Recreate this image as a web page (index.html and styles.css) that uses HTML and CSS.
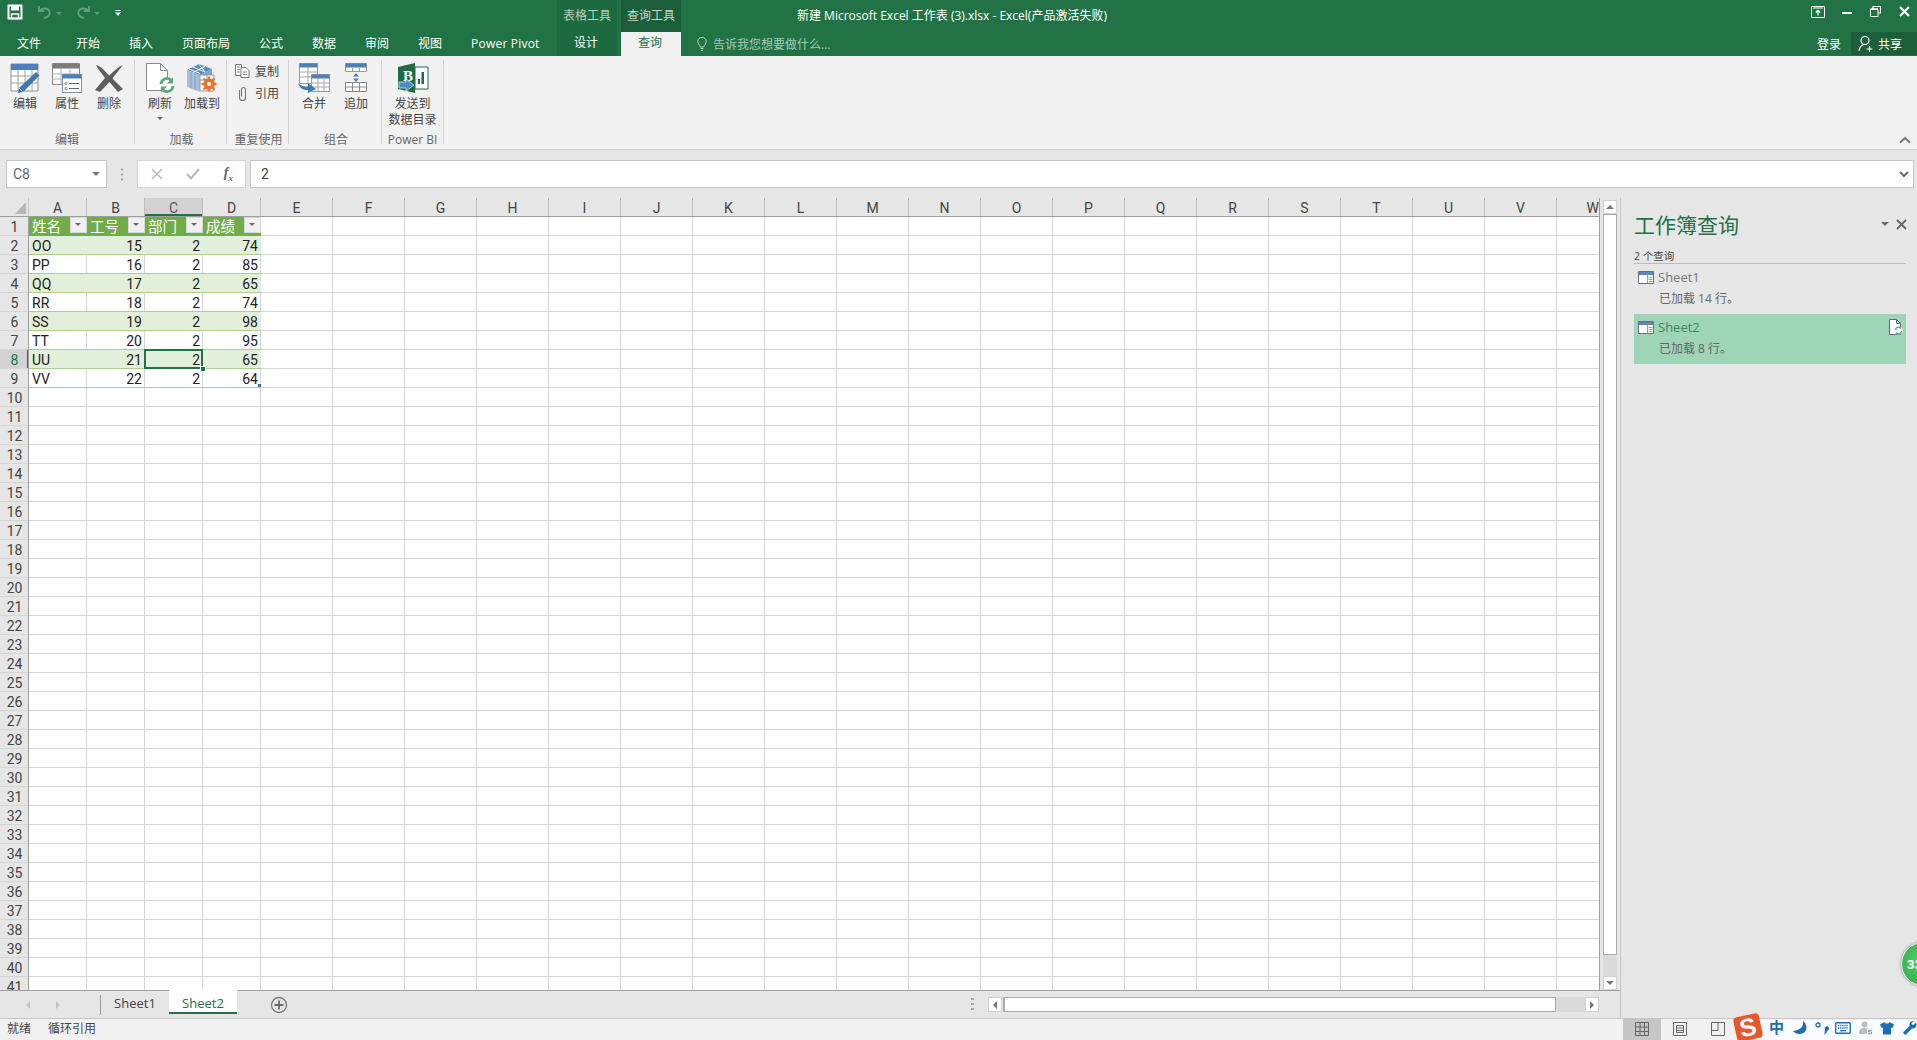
FILE: index.html
```html
<!DOCTYPE html>
<html lang="zh-CN">
<head>
<meta charset="utf-8">
<title>Excel</title>
<link rel="stylesheet" href="styles.css">
</head>
<body>
<div class="app">
  <header class="titlebar">
    <div class="tb-left">
      <div class="qat">
        <svg class="qat-save" width="16" height="16" viewBox="0 0 16 16"><path d="M1.500 1.500h13v13h-13z" fill="none" stroke="#fff" stroke-width="2"/><path d="M4 1.500h8v5H4z" fill="#fff"/><path d="M4.500 10h7v4.500h-7z" fill="none" stroke="#fff" stroke-width="1.600"/></svg>
        <svg class="qat-undo" width="18" height="16" viewBox="0 0 18 16"><path d="M3 2v5h5M3.500 7C6 3.500 12 3.500 13.500 7.500 14.500 10.500 12 13.500 8 14" fill="none" stroke="#5f9c7b" stroke-width="2"/></svg>
        <span class="qat-caret"></span>
        <svg class="qat-redo" width="18" height="16" viewBox="0 0 18 16"><path d="M15 2v5h-5M14.500 7C12 3.500 6 3.500 4.500 7.500 3.500 10.500 6 13.500 10 14" fill="none" stroke="#5f9c7b" stroke-width="2"/></svg>
        <span class="qat-caret"></span>
        <svg class="qat-custom" width="8" height="8" viewBox="0 0 8 8"><path d="M1 1h6v1H1zM1 3.500h6L4 7z" fill="#fff"/></svg>
      </div>
      <nav class="tabs">
        <span class="tab tab-file">文件</span>
        <span class="tab">开始</span>
        <span class="tab">插入</span>
        <span class="tab">页面布局</span>
        <span class="tab">公式</span>
        <span class="tab">数据</span>
        <span class="tab">审阅</span>
        <span class="tab">视图</span>
        <span class="tab tab-latin">Power Pivot</span>
      </nav>
    </div>
    <div class="ctx ctx-table">
      <div class="ctx-label">表格工具</div>
      <div class="ctx-tab">设计</div>
    </div>
    <div class="ctx ctx-query">
      <div class="ctx-label">查询工具</div>
      <div class="ctx-tab ctx-active">查询</div>
    </div>
    <div class="tb-right">
      <div class="title-row">
        <span class="doc-title">新建 Microsoft Excel 工作表 (3).xlsx - Excel(产品激活失败)</span>
        <div class="winctl">
          <svg width="14" height="12" viewBox="0 0 14 12"><path d="M.500.500h13v11H.500z" fill="none" stroke="#fff"/><path d="M2 2h10" stroke="#fff"/><path d="M7 9.500V4.500M4.800 6.500 7 4.300l2.200 2.200" fill="none" stroke="#fff" stroke-width="1.200"/></svg>
          <svg width="10" height="12" viewBox="0 0 10 12"><path d="M0 6h10v2H0z" fill="#fff"/></svg>
          <svg width="11" height="11" viewBox="0 0 11 11"><path d="M.500 3.500h7.500v7H.500z" fill="none" stroke="#fff"/><path d="M.500 2.800h7.500M3 3V.500h7.500v6.500H8" fill="none" stroke="#fff" stroke-width="1.200"/></svg>
          <svg width="11" height="11" viewBox="0 0 11 11"><path d="M1 1l9 9M10 1l-9 9" stroke="#fff" stroke-width="2.200"/></svg>
        </div>
      </div>
      <div class="tell-row">
        <svg class="bulb" width="10" height="14" viewBox="0 0 10 14"><path d="M3.300 10C3 8 .800 7 .800 4.500a4.200 4.200 0 0 1 8.400 0C9.200 7 7 8 6.700 10zM3.500 11.500h3M4 13.300h2" fill="none" stroke="#b9d4c4" stroke-width="1"/></svg>
        <span class="tell-text">告诉我您想要做什么...</span>
        <span class="login">登录</span>
        <span class="share">
          <svg width="16" height="18" viewBox="0 0 16 18"><circle cx="7" cy="5.500" r="4" fill="none" stroke="#fff" stroke-width="1.200"/><path d="M1 16c.500-4 2.500-6 5-6.500M8.500 14h6M11.500 11v6" fill="none" stroke="#fff" stroke-width="1.200"/></svg>
          共享
        </span>
      </div>
    </div>
  </header>

  <section class="ribbon">
    <div class="group g-edit">
      <div class="g-body">
        <div class="lg-btn">
          <svg class="lg-icon" width="30" height="30" viewBox="0 0 30 30"><path d="M1 1h27v27H1z" fill="#fff" stroke="#8c8c8c"/><path d="M1 1h27v6H1z" fill="#4f7fb8"/><path d="M1 13h27M1 20h27M8 7v21M15 7v21M22 7v21" stroke="#a0a0a0" fill="none"/><path d="M26 9l3.500 3.500L13 29l-5 1 1-5z" fill="#3f78b5"/><path d="M9 25l3.500 3.500" stroke="#fff"/></svg>
          <span class="lg-label">编辑</span>
        </div>
        <div class="lg-btn">
          <svg class="lg-icon" width="30" height="30" viewBox="0 0 30 30"><path d="M.500.500h27v21H.500z" fill="#fff" stroke="#8c8c8c"/><path d="M.500.500h27v5H.500z" fill="#7b7b7b"/><path d="M.500 11h27M.500 16h27M9 5v17M18 5v17" stroke="#b0b0b0" fill="none"/><path d="M10.500 11.500h19v18h-19z" fill="#fff" stroke="#7b8fa6"/><path d="M10.500 11.500h19v4h-19z" fill="#4f7fb8"/><path d="M13 19.500h2v2h-2zM13 24.500h2v2h-2z" fill="none" stroke="#777" stroke-width=".7"/><path d="M17 20.500h10M17 25.500h10" stroke="#666"/></svg>
          <span class="lg-label">属性</span>
        </div>
        <div class="lg-btn">
          <svg class="lg-icon" width="30" height="30" viewBox="0 0 30 30"><path d="M2 2c4 .500 9 6 13 10.500C19 9 24 4 29 2c-3 4-8 10-10.500 13.500L29 26l-5 3-8.500-10L6 29l-5-2 10-12C8 11 4 6 2 2z" fill="#5e5e5e"/></svg>
          <span class="lg-label">删除</span>
        </div>
      </div>
      <div class="g-label">编辑</div>
    </div>

    <div class="group g-load">
      <div class="g-body">
        <div class="lg-btn">
          <svg class="lg-icon" width="30" height="30" viewBox="0 0 30 30"><path d="M1.500.500h14l7 7v20h-21z" fill="#fff" stroke="#8a8a8a"/><path d="M15.500.500v7h7" fill="none" stroke="#8a8a8a"/><circle cx="22" cy="22" r="7.500" fill="#fff"/><path d="M16 21a6 6 0 0 1 10.500-3.500M28 23a6 6 0 0 1-10.500 3.500" fill="none" stroke="#5aa77b" stroke-width="2.800"/><path d="M28 14.500v6h-6zM16 29.500v-6h6z" fill="#5aa77b"/></svg>
          <span class="lg-label">刷新</span>
          <span class="mini-caret"></span>
        </div>
        <div class="lg-btn">
          <svg class="lg-icon" width="32" height="30" viewBox="0 0 32 30"><path d="M1 7L13 1l13 5-12 6z" fill="#5a8cc2"/><path d="M7 4l12 5M13 1.500 19 9M7 9.500l12-6M3 6l11 4.500" stroke="#fff" fill="none"/><path d="M1 7l13 5v17L1 24z" fill="#a8bfd8"/><path d="M14 12l12-6v6H14z" fill="#7ea5cf"/><path d="M14 12h14v16H14z" fill="#fff" stroke="#999"/><path d="M5 9v16M9 11v16M14 17h14M21 12v16" stroke="#8a9fb6" fill="none"/><circle cx="23" cy="21" r="5.500" fill="#e2782d"/><path d="M23 13.500v15M15.500 21h15M17.500 15.500l11 11M28.500 15.500l-11 11" stroke="#e2782d" stroke-width="2.400"/><circle cx="23" cy="21" r="2" fill="#fff"/></svg>
          <span class="lg-label">加载到</span>
        </div>
      </div>
      <div class="g-label">加载</div>
    </div>

    <div class="group g-reuse">
      <div class="g-body g-body-col">
        <div class="sm-btn">
          <svg width="15" height="14" viewBox="0 0 15 14"><path d="M.500.500h6l0 11h-6z" fill="#fff" stroke="#777"/><path d="M6 3.500h5l3 3v7H6z" fill="#fff" stroke="#777"/><path d="M2 3h3M2 5.500h3M2 8h3M8 8h4M8 10.500h4" stroke="#888"/></svg>
          <span>复制</span>
        </div>
        <div class="sm-btn">
          <svg width="15" height="15" viewBox="0 0 15 15"><path d="M4.500 4v7.500a3 3 0 0 0 6 0V3.500a2 2 0 0 0-4 0V10.500" fill="none" stroke="#777" stroke-width="1.100"/></svg>
          <span>引用</span>
        </div>
      </div>
      <div class="g-label">重复使用</div>
    </div>

    <div class="group g-combine">
      <div class="g-body">
        <div class="lg-btn">
          <svg class="lg-icon" width="32" height="30" viewBox="0 0 32 30"><path d="M1.500.500h18v20h-18z" fill="#fff" stroke="#999"/><path d="M1.500.500h18v4h-18z" fill="#4f7fb8"/><path d="M1.500 9h18M1.500 14h18M10 4v16" stroke="#a5a5a5" fill="none"/><path d="M13.500 11.500h18v17h-18z" fill="#fff" stroke="#999"/><path d="M13.500 11.500h18v4h-18z" fill="#4f7fb8"/><path d="M13.500 20h18M13.500 24h18M20 15v13M26 15v13" stroke="#a5a5a5" fill="none"/><path d="M0 20c3 3 7 4 10 3.500V20l8 6-8 4v-3c-5 .500-8.500-2-10-7z" fill="#3f78b5"/></svg>
          <span class="lg-label">合并</span>
        </div>
        <div class="lg-btn">
          <svg class="lg-icon" width="24" height="30" viewBox="0 0 24 30"><path d="M1.500.500h21v8h-21z" fill="#fff" stroke="#999"/><path d="M1.500.500h21v4h-21z" fill="#4f7fb8"/><path d="M8.500 5v3M15.500 5v3" stroke="#999"/><path d="M1.500 19.500h21v9h-21z" fill="#fff" stroke="#888"/><path d="M1.500 24h21M8.500 19.500v9M15.500 19.500v9" stroke="#888"/><path d="M12 10l3 3.500H9zM12 19l-3-3.500h6z" fill="#4f7fb8"/></svg>
          <span class="lg-label">追加</span>
        </div>
      </div>
      <div class="g-label">组合</div>
    </div>

    <div class="group g-pbi">
      <div class="g-body">
        <div class="lg-btn lg-wide">
          <svg class="lg-icon" width="32" height="32" viewBox="0 0 32 32"><path d="M18 5h13v22H18z" fill="#fff" stroke="#1f6b45"/><path d="M21 22v-5h2v5zM24.500 22V10h2.500v12z" fill="#1f6b45"/><path d="M1 5l17-4v30L1 27z" fill="#1f6b45"/><text class="pbi-b" x="6" y="19">B</text><path d="M2 20h7v-3l8 6-8 6v-3H2z" fill="#4f8ac6" stroke="#fff" stroke-width=".6"/></svg>
          <span class="lg-label">发送到<br>数据目录</span>
        </div>
      </div>
      <div class="g-label">Power BI</div>
    </div>

    <svg class="ribbon-collapse" width="12" height="8" viewBox="0 0 12 8"><path d="M1 6.500l5-4.500 5 4.500" fill="none" stroke="#777" stroke-width="2"/></svg>
  </section>

  <section class="formula">
    <div class="namebox">
      <span>C8</span>
      <span class="tri-down"></span>
    </div>
    <div class="f-dots"></div>
    <div class="f-buttons">
      <svg width="12" height="12" viewBox="0 0 12 12"><path d="M1 1l10 10M11 1L1 11" stroke="#b8b8b8" stroke-width="1.500"/></svg>
      <svg width="14" height="12" viewBox="0 0 14 12"><path d="M1 6l4 4.500L13 1" fill="none" stroke="#b8b8b8" stroke-width="2"/></svg>
      <span class="fx">f<sub>x</sub></span>
    </div>
    <div class="f-input">
      <span>2</span>
      <svg width="10" height="7" viewBox="0 0 10 7"><path d="M1 1l4 4 4-4" fill="none" stroke="#6a6a6a" stroke-width="2"/></svg>
    </div>
  </section>

  <main class="work">
    <div class="sheet-col">
      <div class="grid-row">
        <div class="grid">
          <div class="col-heads">
            <div class="corner"><svg width="11" height="12" viewBox="0 0 11 12"><path d="M11 0v12H0z" fill="#b6b6b6"/></svg></div>
            <div class="ch ch-n">A</div>
            <div class="ch ch-n">B</div>
            <div class="ch ch-n ch-sel">C</div>
            <div class="ch ch-n">D</div>
            <div class="ch">E</div><div class="ch">F</div><div class="ch">G</div><div class="ch">H</div><div class="ch">I</div><div class="ch">J</div><div class="ch">K</div><div class="ch">L</div><div class="ch">M</div><div class="ch">N</div><div class="ch">O</div><div class="ch">P</div><div class="ch">Q</div><div class="ch">R</div><div class="ch">S</div><div class="ch">T</div><div class="ch">U</div><div class="ch">V</div>
            <div class="ch ch-last">W</div>
          </div>
          <div class="grid-body">
            <div class="row-heads">
              <div class="rh">1</div><div class="rh">2</div><div class="rh">3</div><div class="rh">4</div><div class="rh">5</div><div class="rh">6</div><div class="rh">7</div><div class="rh rh-sel">8</div><div class="rh">9</div><div class="rh">10</div>
              <div class="rh">11</div><div class="rh">12</div><div class="rh">13</div><div class="rh">14</div><div class="rh">15</div><div class="rh">16</div><div class="rh">17</div><div class="rh">18</div><div class="rh">19</div><div class="rh">20</div>
              <div class="rh">21</div><div class="rh">22</div><div class="rh">23</div><div class="rh">24</div><div class="rh">25</div><div class="rh">26</div><div class="rh">27</div><div class="rh">28</div><div class="rh">29</div><div class="rh">30</div>
              <div class="rh">31</div><div class="rh">32</div><div class="rh">33</div><div class="rh">34</div><div class="rh">35</div><div class="rh">36</div><div class="rh">37</div><div class="rh">38</div><div class="rh">39</div><div class="rh">40</div>
              <div class="rh">41</div>
            </div>
            <div class="cells">
              <div class="tbl">
                <div class="tr tr-head">
                  <div class="th">姓名<span class="filter"></span></div>
                  <div class="th">工号<span class="filter"></span></div>
                  <div class="th">部门<span class="filter"></span></div>
                  <div class="th">成绩<span class="filter"></span></div>
                </div>
                <div class="tr band"><div class="td">OO</div><div class="td num">15</div><div class="td num">2</div><div class="td num">74</div></div>
                <div class="tr"><div class="td">PP</div><div class="td num">16</div><div class="td num">2</div><div class="td num">85</div></div>
                <div class="tr band"><div class="td">QQ</div><div class="td num">17</div><div class="td num">2</div><div class="td num">65</div></div>
                <div class="tr"><div class="td">RR</div><div class="td num">18</div><div class="td num">2</div><div class="td num">74</div></div>
                <div class="tr band"><div class="td">SS</div><div class="td num">19</div><div class="td num">2</div><div class="td num">98</div></div>
                <div class="tr"><div class="td">TT</div><div class="td num">20</div><div class="td num">2</div><div class="td num">95</div></div>
                <div class="tr band"><div class="td">UU</div><div class="td num">21</div><div class="td num">2</div><div class="td num">65</div></div>
                <div class="tr"><div class="td">VV</div><div class="td num">22</div><div class="td num">2</div><div class="td num">64</div></div>
              </div>
              <div class="blank"></div>
              <div class="selection"></div>
              <div class="sel-handle"></div>
              <div class="tbl-handle"></div>
            </div>
          </div>
        </div>
        <div class="vscroll">
          <div class="sb-btn"><span class="tri-up"></span></div>
          <div class="v-thumb"></div>
          <div class="v-track"></div>
          <div class="sb-btn"><span class="tri-down"></span></div>
        </div>
      </div>
      <div class="tabbar">
        <span class="nav-arrow nav-left"></span>
        <span class="nav-arrow nav-right"></span>
        <span class="tab-sep"></span>
        <span class="stab">Sheet1</span>
        <span class="stab stab-active">Sheet2</span>
        <svg class="add-sheet" width="18" height="18" viewBox="0 0 18 18"><circle cx="9" cy="9" r="7.500" fill="none" stroke="#7a7a7a" stroke-width="1.300"/><path d="M9 4.500v9M4.500 9h9" stroke="#6a6a6a" stroke-width="1.800"/></svg>
        <span class="h-dots"></span>
        <div class="hscroll">
          <div class="sb-btn sb-h"><span class="tri-left"></span></div>
          <div class="h-thumb"></div>
          <div class="h-track"></div>
          <div class="sb-btn sb-h"><span class="tri-right"></span></div>
        </div>
      </div>
    </div>

    <aside class="pane">
      <div class="pane-head">
        <h1 class="pane-title">工作簿查询</h1>
        <span class="pane-caret"></span>
        <svg width="11" height="11" viewBox="0 0 11 11"><path d="M1 1l9 9M10 1l-9 9" stroke="#666" stroke-width="1.800"/></svg>
      </div>
      <div class="pane-count">2 个查询</div>
      <div class="q-item">
        <div class="q-name">
          <svg width="16" height="13" viewBox="0 0 16 13"><path d="M.500.500h15v12H.500z" fill="#fff" stroke="#6d6d6d"/><path d="M1 1h14v3H1z" fill="#5b88b8"/><path d="M9.500 4v8M10.500 6.500h4M10.500 8.500h4M10.500 10.500h4" stroke="#888" stroke-width=".8"/></svg>
          <span>Sheet1</span>
        </div>
        <div class="q-sub">已加载 14 行。</div>
      </div>
      <div class="q-item q-sel">
        <div class="q-name">
          <svg width="16" height="13" viewBox="0 0 16 13"><path d="M.500.500h15v12H.500z" fill="#fff" stroke="#6d6d6d"/><path d="M1 1h14v3H1z" fill="#5b88b8"/><path d="M9.500 4v8M10.500 6.500h4M10.500 8.500h4M10.500 10.500h4" stroke="#888" stroke-width=".8"/></svg>
          <span>Sheet2</span>
          <svg class="q-refresh" width="15" height="16" viewBox="0 0 15 16"><path d="M1.500.500h7l4 4v11h-11z" fill="#fff" stroke="#666"/><path d="M8.500.500v4h4" fill="none" stroke="#666"/><circle cx="10.500" cy="11.500" r="4" fill="#fff"/><path d="M7.500 11a3 3 0 0 1 5.500-1.500M13.500 12a3 3 0 0 1-5.500 1.500" fill="none" stroke="#5aa77b" stroke-width="1.400"/></svg>
        </div>
        <div class="q-sub">已加载 8 行。</div>
      </div>
    </aside>
  </main>

  <footer class="status">
    <span class="st-ready">就绪</span>
    <span class="st-circ">循环引用</span>
    <div class="views">
      <div class="view view-on"><svg width="14" height="14" viewBox="0 0 14 14"><path d="M.500.500h13v13H.500zM.500 5h13M.500 9.500h13M5 .500v13M9.500 .500v13" fill="none" stroke="#666"/></svg></div>
      <div class="view"><svg width="14" height="14" viewBox="0 0 14 14"><path d="M.500.500h13v13H.500z" fill="none" stroke="#666"/><path d="M3.500 3.500h7v7h-7zM3.500 6h7M3.500 8.500h7" fill="none" stroke="#666"/></svg></div>
      <div class="view"><svg width="14" height="14" viewBox="0 0 14 14"><path d="M.500.500h13v13H.500zM.500 8.500h6.500V.500" fill="none" stroke="#666"/></svg></div>
    </div>
  </footer>

  <div class="float-ball">33</div>

  <div class="ime">
    <span class="ime-logo">S</span>
    <span class="ime-zh">中</span>
    <svg class="ime-moon" width="15" height="14" viewBox="0 0 15 14"><path d="M11 0c1 5-2 9-10 10 3 4 11 4 13-1 1-3 0-7-3-9z" fill="#1b6db5"/></svg>
    <svg class="ime-punc" width="14" height="14" viewBox="0 0 14 14"><circle cx="3" cy="4" r="2" fill="none" stroke="#1b6db5" stroke-width="1.300"/><path d="M10 7.500a1.800 1.800 0 1 1 1.800 1.800C11.800 11 11 12 9.500 13" fill="#1b6db5" stroke="#1b6db5"/></svg>
    <svg class="ime-keys" width="16" height="12" viewBox="0 0 16 12"><rect x=".7" y=".7" width="14.600" height="10.600" rx="1" fill="#fff" stroke="#1b6db5" stroke-width="1.400"/><path d="M3 3.500h10M3 6h10" stroke="#1b6db5" stroke-width="1.300" stroke-dasharray="1.300 .8"/><path d="M5 8.700h6" stroke="#1b6db5" stroke-width="1.300"/></svg>
    <svg class="ime-user" width="14" height="14" viewBox="0 0 14 14"><circle cx="5.500" cy="3.500" r="3" fill="#b8bfc6"/><path d="M0 12c0-4 2-5 5.500-5S10 8 10 8v5H0z" fill="#b8bfc6"/><path d="M8 8h6v6H8z" fill="#fff"/><path d="M13 9.200H9.500v1.700H12.500v1.800H9" fill="none" stroke="#8c949c"/></svg>
    <svg class="ime-shirt" width="14" height="14" viewBox="0 0 14 14"><path d="M4.500 1L0 3.500 1.500 7 3 6.500V13.500h8V6.500l1.500.5L14 3.500 9.500 1C9 3 5 3 4.500 1z" fill="#1b6db5"/></svg>
    <svg class="ime-tool" width="14" height="14" viewBox="0 0 14 14"><path d="M13 1.500l-2.500 2.500-1.500-.5-.5-1.500L11 0C8.500-.5 6 1.500 6.500 5L.500 11c-1 1 1.500 3.500 2.500 2.500l6-6c3.500.5 5.500-2.500 4-6z" fill="#1b6db5"/></svg>
  </div>
</div>
</body>
</html>
```

FILE: styles.css
```css
* { box-sizing: border-box; }
html, body { margin: 0; padding: 0; }
body {
  width: 1917px;
  height: 1040px;
  overflow: hidden;
  background: #e6e6e6;
  font-family: "Open Sans", "Noto Sans CJK SC", sans-serif;
  font-size: 12px;
  color: #444;
}
.app { position: relative; display: flex; flex-direction: column; width: 1917px; height: 1040px; overflow: hidden; }

/* Title bar */
.titlebar { display: flex; height: 56px; flex: none; background: #217346; color: #fff; }
.tb-left { width: 557px; flex: none; display: flex; flex-direction: column; }
.qat { height: 32px; display: flex; align-items: flex-start; padding: 3px 0 0 7px; }
.qat-save { margin-top: 1px; }
.qat-undo { margin: 1px 0 0 13px; }
.qat-redo { margin: 1px 0 0 12px; }
.qat-caret { width: 0; height: 0; margin: 9px 0 0 2px; border: 3px solid transparent; border-top-color: #5f9c7b; }
.qat-custom { margin: 6px 0 0 14px; }
.tabs { height: 24px; display: flex; align-items: center; }
.tab { padding: 0 14.5px; line-height: 20px; color: #fff; white-space: nowrap; }
.tab-file { width: 61.5px; padding: 0 0 0 17px; }
.tab-latin { letter-spacing: .2px; }
.ctx { width: 60px; flex: none; display: flex; flex-direction: column; }
.ctx-table { background: #1e6a40; margin-right: 4px; }
.ctx-label { height: 32px; line-height: 32px; text-align: center; color: #b7d0c1; }
.ctx-query .ctx-label { background: #1c5e39; color: #c5d9cd; }
.ctx-tab { height: 24px; line-height: 22px; padding-right: 2px; text-align: center; color: #fff; }
.ctx-active { background: #f1f1f1; color: #217346; }
.tb-right { flex: 1; display: flex; flex-direction: column; }
.title-row { height: 32px; display: flex; padding-left: 116px; }
.doc-title { line-height: 32px; color: #fff; white-space: nowrap; }
.winctl { margin-left: auto; display: flex; align-items: flex-start; padding-top: 6px; }
.winctl svg { margin-right: 18px; }
.winctl svg:first-child { margin-right: 17px; margin-left: 1px; }
.winctl svg:last-child { margin-right: 7px; }
.tell-row { height: 24px; display: flex; align-items: center; padding-left: 16px; }
.bulb { margin-right: 6px; }
.tell-text { color: #a9c9b6; }
.login { margin-left: auto; color: #fff; margin-right: 10px; }
.share { width: 66px; height: 23px; align-self: flex-start; background: #1c5e39; display: flex; align-items: center; gap: 4px; padding-left: 7px; color: #fff; }

/* Ribbon */
.ribbon { position: relative; height: 94px; flex: none; display: flex; padding-left: 4px; background: #f1f1f1; border-bottom: 1px solid #d2d2d2; }
.group { height: 84px; margin-top: 4px; display: flex; flex-direction: column; border-right: 1px solid #d2d2d2; }
.g-edit { width: 131px; }
.g-load { width: 92px; padding-left: 4px; }
.g-reuse { width: 62px; }
.g-combine { width: 93px; padding-left: 4px; }
.g-pbi { width: 62px; }
.g-body { height: 72px; flex: none; display: flex; }
.g-body-col { flex-direction: column; padding: 0 0 0 8px; }
.g-label { height: 16px; flex: none; line-height: 16px; text-align: center; color: #666; white-space: nowrap; }
.g-edit .g-label { padding-right: 4px; }
.g-load .g-label { padding-right: 2px; }
.g-reuse .g-label { padding-left: 2px; }
.g-combine .g-label { padding-right: 2px; }
.lg-btn { width: 42px; display: flex; flex-direction: column; align-items: center; }
.lg-wide { width: 61px; }
.lg-icon { height: 32px; margin-top: 2px; flex: none; }
.lg-label { margin-top: 2px; line-height: 16px; text-align: center; white-space: nowrap; color: #444; }
.mini-caret { width: 0; height: 0; margin-top: 5px; border: 3px solid transparent; border-top-color: #666; }
.pbi-b { font: bold 15px "Liberation Serif", serif; fill: #fff; }
.sm-btn { height: 22px; display: flex; align-items: center; gap: 4px; color: #444; }
.sm-btn span { margin-left: 1px; }
.ribbon-collapse { position: absolute; right: 6px; bottom: 5px; }

/* Formula bar */
.formula { height: 48px; flex: none; display: flex; padding: 10px 3px 0 6px; background: #e6e6e6; }
.formula > div { height: 28px; }
.namebox { width: 101px; display: flex; align-items: center; justify-content: space-between; padding: 0 6px; background: #fff; border: 1px solid #c6c6c6; font: 14px Roboto, sans-serif; color: #666; }
.f-dots { width: 30px; background: radial-gradient(circle, #9a9a9a 1px, transparent 1.2px) 0 0 / 100% 5px no-repeat, radial-gradient(circle, #9a9a9a 1px, transparent 1.2px) 0 5px / 100% 5px no-repeat, radial-gradient(circle, #9a9a9a 1px, transparent 1.2px) 0 10px / 100% 5px no-repeat; background-origin: content-box; padding-top: 7px; }
.f-buttons { width: 109px; display: flex; align-items: center; justify-content: space-between; padding: 0 12px 0 13px; background: #fff; border: 1px solid #d4d4d4; }
.fx { font: italic bold 14px "Liberation Serif", serif; color: #666; }
.fx sub { font-size: 9px; }
.f-input { flex: 1; margin-left: 4px; display: flex; align-items: center; justify-content: space-between; padding: 0 4px 0 10px; background: #fff; border: 1px solid #c6c6c6; font: 14px Roboto, sans-serif; color: #444; }

/* Work area */
.work { flex: 1; min-height: 0; display: flex; }
.sheet-col { width: 1620px; flex: none; display: flex; flex-direction: column; }
.grid-row { height: 792px; flex: none; display: flex; }
.grid { width: 1600px; flex: none; display: flex; flex-direction: column; overflow: hidden; border-right: 1px solid #9e9e9e; }
.col-heads { height: 19px; flex: none; display: flex; border-bottom: 1px solid #9e9e9e; font: 14px/20px Roboto, sans-serif; color: #444; }
.corner { width: 29px; flex: none; padding: 4px 0 0 15px; border-right: 1px solid #c6c6c6; }
.corner svg { display: block; }
.ch { width: 72px; flex: none; text-align: center; border-right: 1px solid #bdbdbd; }
.ch-n { width: 58px; }
.ch-sel { background: #d2d2d2; box-shadow: inset 0 -2px 0 #217346; color: #555; }
.ch-last { width: 43px; border-right: 0; text-align: right; padding-right: 1px; }
.grid-body { flex: 1; min-height: 0; display: flex; }
.row-heads { width: 29px; flex: none; border-right: 1px solid #9e9e9e; font: 14px/20px Roboto, sans-serif; color: #444; }
.rh { height: 19px; text-align: center; border-bottom: 1px solid #d4d4d4; padding-left: 1px; }
.rh-sel { background: #d2d2d2; box-shadow: inset -1px 0 0 #217346; color: #217346; }
.cells { position: relative; flex: 1; display: flex; background: #fff; font: 14px/20px Roboto, sans-serif; color: #222; }
.tbl { width: 232px; flex: none; height: 100%; background-image: repeating-linear-gradient(to right, transparent 0 57px, #d4d4d4 57px 58px), repeating-linear-gradient(to bottom, transparent 0 18px, #d4d4d4 18px 19px); }
.blank { flex: 1; background-image: repeating-linear-gradient(to right, transparent 0 71px, #d4d4d4 71px 72px), repeating-linear-gradient(to bottom, transparent 0 18px, #d4d4d4 18px 19px); }
.tr { display: flex; height: 19px; border-bottom: 1px solid #a9d08e; }
.tr.band { background: #e2efda; }
.tr-head { background: #70ad47; border-bottom: 0; }
.th { position: relative; width: 58px; padding-left: 3px; font: 14.5px/18px "Noto Sans CJK SC", sans-serif; color: #fff; }
.filter { position: absolute; right: 0; top: 0; width: 17px; height: 16px; background: #f0f0f0; border: 1px solid #d8d8d8; }
.filter::after { content: ""; position: absolute; left: 4px; top: 5px; border: 3.5px solid transparent; border-top-color: #666; }
.td { width: 58px; padding: 0 3px; }
.num { text-align: right; }
.selection { position: absolute; left: 115px; top: 132px; width: 59px; height: 20px; border: 2px solid #217346; }
.sel-handle { position: absolute; left: 171px; top: 149px; width: 6px; height: 6px; background: #217346; border: 1px solid #fff; }
.tbl-handle { position: absolute; left: 229px; top: 167px; width: 3px; height: 3px; background: #3f6f9f; }

/* Scrollbars */
.vscroll { width: 14px; margin-left: 3px; padding-top: 2px; display: flex; flex-direction: column; }
.sb-btn { flex: none; display: flex; align-items: center; justify-content: center; width: 14px; height: 14px; background: #fff; border: 1px solid #d0d0d0; }
.v-thumb { height: 741px; flex: none; background: #fff; border: 1px solid #ababab; }
.v-track { flex: 1; background: #dadada; }
.tri-up { width: 0; height: 0; border: 4px solid transparent; border-top: 0; border-bottom-color: #777; }
.tri-down { width: 0; height: 0; border: 4px solid transparent; border-bottom: 0; border-top-color: #777; }
.tri-left { width: 0; height: 0; border: 4px solid transparent; border-left: 0; border-right-color: #777; }
.tri-right { width: 0; height: 0; border: 4px solid transparent; border-right: 0; border-left-color: #777; }

/* Sheet tabs */
.tabbar { height: 28px; flex: none; display: flex; align-items: center; padding-right: 21px; border-top: 1px solid #9e9e9e; font: 13px "Open Sans", sans-serif; }
.nav-arrow { width: 0; height: 0; border: 4px solid transparent; }
.nav-left { margin-left: 26px; border-left: 0; border-right-color: #c4c4c4; }
.nav-right { margin-left: 26px; border-right: 0; border-left-color: #c4c4c4; }
.tab-sep { width: 1px; height: 20px; margin-left: 40px; background: #9a9a9a; }
.stab { width: 68px; margin-bottom: 4px; text-align: center; color: #444; line-height: 20px; }
.stab-active { margin: -1px 0 0; height: 24px; align-self: flex-start; line-height: 26px; background: #fff; color: #217346; border-bottom: 2px solid #217346; }
.add-sheet { margin-left: 33px; }
.h-dots { width: 3px; height: 13px; margin-left: auto; background: repeating-linear-gradient(to bottom, #a6a6a6 0 2px, transparent 2px 5px); }
.hscroll { width: 611px; height: 15px; margin-left: 14px; display: flex; }
.sb-h { height: 15px; }
.h-thumb { width: 553px; flex: none; margin-left: 1px; background: #fff; border: 1px solid #ababab; border-left-width: 2px; }
.h-track { flex: 1; background: #dadada; }

/* Query pane */
.pane { flex: 1; padding: 13px 11px 0 13px; border-left: 1px solid #c6c6c6; }
.pane-head { height: 26px; display: flex; align-items: center; }
.pane-title { margin: 0; font: normal 21px/26px "Noto Sans CJK SC", sans-serif; color: #217346; }
.pane-caret { width: 0; height: 0; margin: 0 7px 0 auto; border: 4.5px solid transparent; border-bottom: 0; border-top-color: #6a6a6a; }
.pane-head svg { margin-right: -1px; }
.pane-count { height: 15px; margin-top: 12px; line-height: 14px; font-size: 10.5px; border-bottom: 1px solid #bcbcbc; color: #444; }
.q-item { height: 50px; padding-left: 4px; }
.q-sel { background: #9fd5b7; }
.q-name { height: 26px; display: flex; align-items: center; gap: 4px; font: 13px "Open Sans", sans-serif; color: #787878; }
.q-sel .q-name { color: #3f8660; }
.q-refresh { margin: 0 3px 0 auto; }
.q-sub { height: 18px; line-height: 18px; padding-left: 21px; color: #666; }

/* Status */
.status { height: 22px; flex: none; display: flex; align-items: center; padding-left: 7px; background: #f1f1f1; border-top: 1px solid #c6c6c6; }
.st-ready, .st-circ { margin-bottom: 3px; }
.st-circ { margin-left: 17px; }
.views { display: flex; margin-left: 1527px; height: 21px; }
.view { width: 38px; padding-bottom: 2px; display: flex; align-items: center; justify-content: center; }
.view-on { background: #c6c6c6; }

/* Overlays */
.float-ball { position: absolute; left: 1901px; top: 942px; width: 44px; height: 44px; padding-left: 5px; border-radius: 50%; background: radial-gradient(circle at 50% 40%, #57d16d, #2ea84a); border: 1px solid #e8f4e8; box-shadow: 0 0 3px #777; font: bold 13px/44px Roboto, sans-serif; color: #fff; }
.ime { position: absolute; left: 1735px; top: 1013px; width: 182px; height: 27px; display: flex; align-items: flex-end; }
.ime::before { content: ""; position: absolute; left: 24px; right: 0; top: 7px; bottom: 0; background: #f8fbff; }
.ime > svg, .ime-zh { position: relative; margin-bottom: 5px; }
.ime > svg { margin-left: 8px; }
.ime > .ime-keys { margin-left: 6px; margin-bottom: 6px; }
.ime > .ime-user { margin-left: 8px; }
.ime > .ime-shirt { margin-left: 7px; }
.ime > .ime-tool { margin-left: 9px; }
.ime-logo { position: relative; width: 26px; height: 25px; background: #e8562a; border-radius: 4px; transform: rotate(-12deg); font: bold 25px/25px "Liberation Sans", sans-serif; text-align: center; color: #fff; }
.ime-zh { margin-left: 8px; font: bold 15px/17px "Noto Sans CJK SC", sans-serif; color: #1b6db5; }
```
